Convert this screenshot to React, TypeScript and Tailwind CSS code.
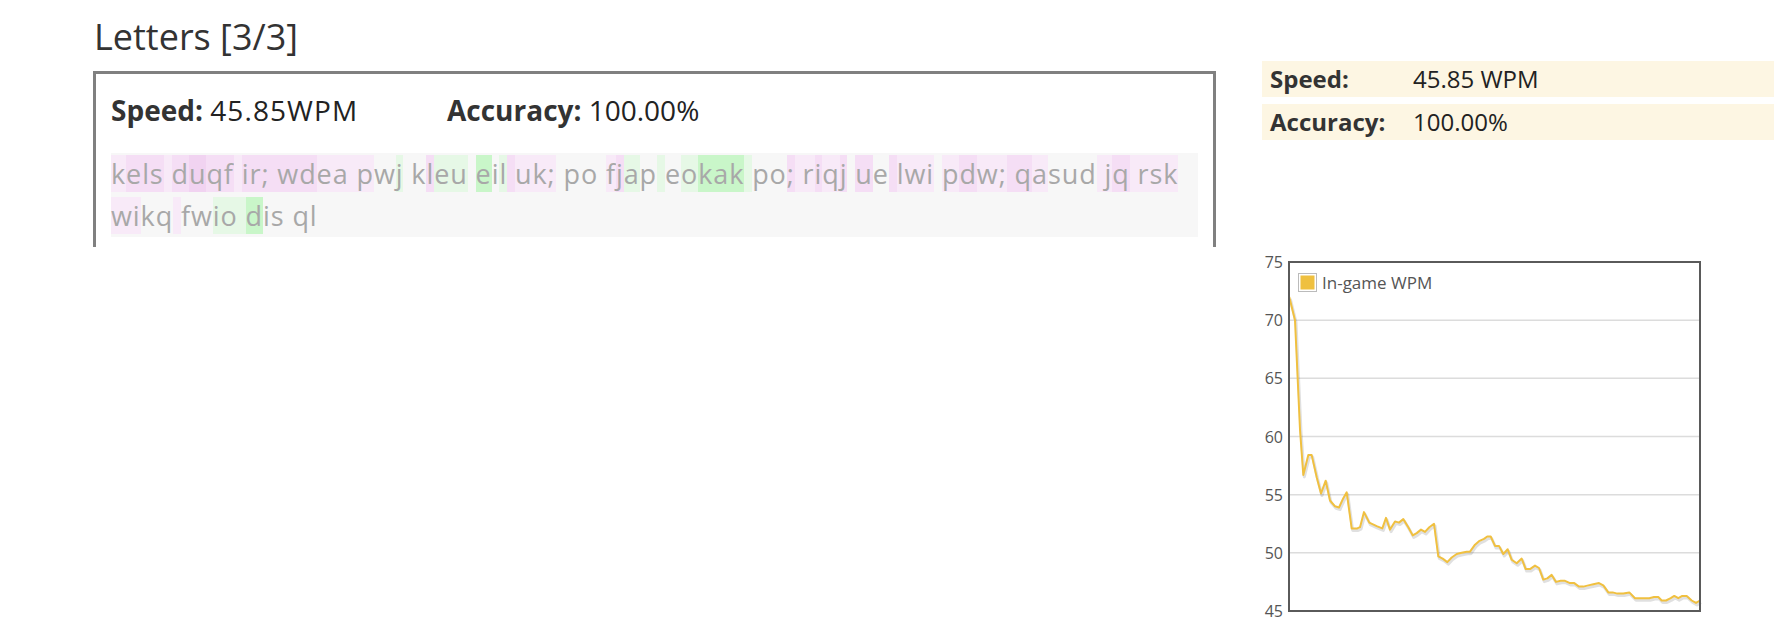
import React from 'react';

// highlight shades per letter (pink = slow, green = fast)
const shade: Record<string, string> = {
  a: 'bg-[#f8eaf8]',
  b: 'bg-[#f5def5]',
  c: 'bg-[#f1d3f1]',
  g: 'bg-[#e6f8e6]',
  G: 'bg-[#c9f6c9]',
  '': '',
};

const line1: [string, string][] = [
  ['k', 'a'], ['els', 'b'], [' ', 'a'], ['d', 'b'], ['u', 'c'], ['qf', 'b'], [' ', 'a'],
  ['ir; wd', 'b'], ['ea p', 'a'], ['w', ''], ['j', 'g'], [' k', ''], ['l', 'b'], ['eu', 'g'],
  [' ', ''], ['e', 'G'], ['i', ''], ['l', 'g'], [' ', 'b'], ['uk;', 'a'], [' po ', ''],
  ['f', 'a'], ['j', 'b'], ['a', 'g'], ['p', ''], [' ', 'g'], ['e', ''], ['o', 'g'],
  ['kak', 'G'], [' ', 'g'], ['po', ''], [';', 'b'], [' r', 'a'], ['i', 'b'], ['q', 'a'],
  ['j', 'b'], [' ', ''], ['u', 'b'], ['e', ''], [' ', 'b'], ['lwi', 'a'], [' ', ''],
  ['p', 'a'], ['d', 'b'], ['w;', 'a'], [' q', 'b'], ['a', 'a'], ['sud', ''], [' j', 'a'],
  ['q', 'b'], [' rsk', 'a'],
];

const line2: [string, string][] = [
  ['wi', 'a'], ['kq', ''], [' ', 'a'], ['fw', ''], ['io ', 'g'], ['d', 'G'], ['is ql', ''],
];

// [x in reference zoom units, wpm]
const wpm: [number, number][] = [
  [148, 72], [165, 70], [180, 60.6], [190, 56.7], [205, 58.4], [215, 58.4], [230, 56.5],
  [243, 55.1], [257, 56.2], [270, 54.5], [285, 54.0], [297, 53.9], [310, 54.7], [320, 55.2],
  [335, 52.1], [352, 52.1], [360, 52.2], [372, 53.5], [388, 52.6], [410, 52.3], [427, 52.1],
  [438, 53.0], [450, 52.0], [465, 52.7], [477, 52.6], [490, 52.9], [505, 52.2], [518, 51.5],
  [530, 51.7], [543, 52.0], [555, 51.8], [568, 52.2], [582, 52.5], [595, 49.7], [608, 49.5],
  [622, 49.2], [635, 49.6], [650, 49.9], [665, 50.0], [680, 50.1], [690, 50.1], [705, 50.7],
  [717, 51.0], [732, 51.2], [742, 51.4], [752, 51.4], [765, 50.6], [777, 50.6], [790, 49.9],
  [803, 50.3], [815, 49.4], [830, 49.1], [845, 49.5], [857, 48.6], [870, 48.6], [885, 48.9],
  [897, 48.7], [910, 47.7], [922, 47.8], [935, 48.1], [948, 47.5], [962, 47.6], [975, 47.6],
  [990, 47.4], [1003, 47.4], [1017, 47.1], [1030, 47.1], [1045, 47.2], [1060, 47.3],
  [1077, 47.4], [1090, 47.2], [1105, 46.6], [1118, 46.6], [1132, 46.5], [1150, 46.5],
  [1168, 46.6], [1185, 46.1], [1198, 46.1], [1215, 46.1], [1228, 46.1], [1242, 46.2],
  [1255, 46.2], [1265, 45.9], [1278, 45.9], [1292, 46.1], [1303, 46.3], [1315, 46.1],
  [1327, 46.3], [1340, 46.3], [1355, 45.9], [1368, 45.7], [1380, 45.9],
];

const yOf = (v: number) => 12 + ((75 - v) * 349) / 30;

const Line = ({ runs }: { runs: [string, string][] }) => (
  <div className="whitespace-pre">
    {runs.map(([t, c], i) => (
      <span key={i} className={shade[c]}>
        {t}
      </span>
    ))}
  </div>
);

const WpmChart = () => {
  const pts = wpm.map(([zx, v]) => `${(zx / 3 - 22).toFixed(1)},${yOf(v).toFixed(1)}`).join(' ');
  return (
    <svg width="512" height="387" className="mt-[110px] block">
      {[70, 65, 60, 55, 50].map((v) => (
        <line key={v} x1="27" x2="438" y1={yOf(v)} y2={yOf(v)} stroke="#dcdcdc" strokeWidth="1.5" />
      ))}
      {[75, 70, 65, 60, 55, 50, 45].map((v) => (
        <text key={v} x="21" y={yOf(v) + 6} textAnchor="end" fontSize="16" fill="#555">
          {v}
        </text>
      ))}
      <polyline points={pts} transform="translate(1,2)" fill="none" stroke="rgba(0,0,0,0.12)" strokeWidth="3" strokeLinejoin="round" />
      <polyline points={pts} fill="none" stroke="#f0c040" strokeWidth="2" strokeLinejoin="round" />
      <rect x="27" y="12" width="411" height="349" fill="none" stroke="#5a5a5a" strokeWidth="2" />
      <rect x="36.5" y="23.5" width="18" height="18" fill="#fff" stroke="#bbb" />
      <rect x="38.5" y="25.5" width="14" height="14" fill="#efc03f" />
      <text x="60" y="39" fontSize="17" fill="#555">In-game WPM</text>
    </svg>
  );
};

const App: React.FC = () => {
  return (
    <div className="flex w-[1774px] h-[637px] overflow-hidden bg-white font-['Open_Sans',sans-serif]">
      {/* Lesson panel */}
      <div className="ml-[93px] w-[1123px]">
        <h1 className="mt-[12px] h-[50px] pl-[1px] text-[36px] leading-[50px] text-[#333]">Letters [3/3]</h1>
        <div className="mt-[9px] h-[176px] border-x-[3px] border-t-[3px] border-[#808080] px-[15px] pt-[16px]">
          <div className="flex h-[40px] text-[28px] leading-[40px] text-[#222]">
            <span className="w-[336px]">
              <b className="font-bold text-[#333]">Speed:</b> <span className="tracking-[1.1px]">45.85WPM</span>
            </span>
            <span>
              <b className="font-bold text-[#333]">Accuracy:</b> 100.00%
            </span>
          </div>
          <div className="mt-[23px] bg-[#f7f7f7] text-[27px] leading-[42px] tracking-[0.9px] text-[#a8a8a8]">
            <Line runs={line1} />
            <Line runs={line2} />
          </div>
        </div>
      </div>

      {/* Stats sidebar */}
      <div className="ml-[46px] flex-1 pt-[61px]">
        <div className="flex h-[36px] bg-[#fdf6e3] pl-[8px] text-[24px] leading-[36px] text-[#222]">
          <span className="w-[143px] font-bold text-[#333]">Speed:</span>
          <span>45.85 WPM</span>
        </div>
        <div className="mt-[7px] flex h-[36px] bg-[#fdf6e3] pl-[8px] text-[24px] leading-[36px] text-[#222]">
          <span className="w-[143px] font-bold text-[#333]">Accuracy:</span>
          <span>100.00%</span>
        </div>
        <WpmChart />
      </div>
    </div>
  );
};

export default App;
